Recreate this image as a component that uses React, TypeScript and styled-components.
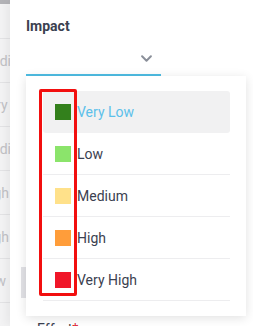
import React from 'react';
import styled, { createGlobalStyle } from 'styled-components';

const GlobalStyle = createGlobalStyle`
  html, body {
    margin: 0;
    padding: 0;
    background: #ffffff;
    font-family: Roboto, "Liberation Sans", sans-serif;
  }
`;

const levels = [
  { label: 'Very Low', color: '#33801c' },
  { label: 'Low', color: '#8be46b' },
  { label: 'Medium', color: '#ffe18a' },
  { label: 'High', color: '#ff9d3a' },
  { label: 'Very High', color: '#f01628' },
];

const backdropRows = ['Medium', 'Very', 'Medium', 'High', 'High', 'Low'];

const App = () => {
  return (
    <>
      <GlobalStyle />
      <Screen>
        <Backdrop>
          <TopBar />
          <BackdropRow first />
          {backdropRows.map((word, i) => (
            <BackdropRow key={i}>
              <BackdropText>{word}</BackdropText>
            </BackdropRow>
          ))}
        </Backdrop>
        <Panel>
          <FieldLabel>Impact</FieldLabel>
          <Select>
            <Chevron viewBox="0 0 10 6">
              <path d="M1 1 L5 5 L9 1" fill="none" stroke="#8a8f99" strokeWidth="1.8" strokeLinecap="round" strokeLinejoin="round" />
            </Chevron>
          </Select>
          <HiddenButton />
          <NextLabel>
            Effort<Required>*</Required>
          </NextLabel>
          <Menu>
            {levels.map((level, i) => (
              <Option key={level.label} active={i === 0}>
                <Swatch color={level.color} />
                <OptionText active={i === 0}>{level.label}</OptionText>
              </Option>
            ))}
            <Marker />
          </Menu>
        </Panel>
      </Screen>
    </>
  );
};

const Screen = styled.div`
  display: flex;
  width: 253px;
  height: 326px;
  overflow: hidden;
`;

const Backdrop = styled.div`
  width: 10px;
  flex-shrink: 0;
  background: #f4f4f5;
  overflow: hidden;
`;

const TopBar = styled.div`
  height: 4px;
  background: #b4b4b8;
`;

const BackdropRow = styled.div<{ first?: boolean }>`
  height: ${(p) => (p.first ? '35px' : '44px')};
  box-sizing: border-box;
  border-bottom: 1px solid #e4e4e6;
  display: flex;
  align-items: center;
`;

const BackdropText = styled.span`
  white-space: nowrap;
  font-size: 14px;
  color: #c2c2c6;
  margin-left: -20px;
`;

const Panel = styled.div`
  position: relative;
  flex: 1;
  background: #ffffff;
  box-shadow: -4px 0 10px rgba(0, 0, 0, 0.06);
  padding: 17px 0 0 16px;
  display: flex;
  flex-direction: column;
  overflow: hidden;

  & > * {
    flex-shrink: 0;
  }
`;

const FieldLabel = styled.div`
  font-size: 14px;
  font-weight: 700;
  color: #3b4150;
  line-height: 18px;
`;

const Select = styled.div`
  width: 135px;
  height: 33px;
  margin-top: 8px;
  border-bottom: 2px solid #4fbde3;
  display: flex;
  align-items: center;
  justify-content: flex-end;
  box-sizing: border-box;
  padding: 0 9px 0 0;
`;

const Chevron = styled.svg`
  width: 11px;
  height: 7px;
`;

const HiddenButton = styled.div`
  width: 40px;
  height: 31px;
  margin: 191px 0 0 -5px;
  background: #e2e2e6;
`;

const NextLabel = styled.div`
  margin: 22px 0 0 11px;
  font-size: 14px;
  line-height: 18px;
  color: #3b4150;
`;

const Required = styled.span`
  color: #e0202a;
`;

const Menu = styled.div`
  position: absolute;
  top: 76px;
  left: 16px;
  width: 220px;
  height: 240px;
  box-sizing: border-box;
  padding: 15px 16px 0 17px;
  background: #ffffff;
  box-shadow: 0 2px 10px rgba(0, 0, 0, 0.12);
`;

const Option = styled.div<{ active?: boolean }>`
  height: 42px;
  box-sizing: border-box;
  display: flex;
  align-items: center;
  padding-left: 12px;
  background: ${(p) => (p.active ? '#f1f1f2' : 'transparent')};
  border-radius: ${(p) => (p.active ? '3px' : '0')};
  border-bottom: 1px solid ${(p) => (p.active ? 'transparent' : '#ededef')};
`;

const Swatch = styled.span<{ color: string }>`
  width: 16px;
  height: 16px;
  background: ${(p) => p.color};
  flex-shrink: 0;
`;

const OptionText = styled.span<{ active?: boolean }>`
  margin-left: 6px;
  font-size: 14px;
  color: ${(p) => (p.active ? '#5cc0ea' : '#3b4150')};
`;

const Marker = styled.div`
  position: absolute;
  left: 13px;
  top: 13px;
  width: 38px;
  height: 207px;
  box-sizing: border-box;
  border: 3px solid #f20f0f;
  border-radius: 2px;
`;

export default App;
